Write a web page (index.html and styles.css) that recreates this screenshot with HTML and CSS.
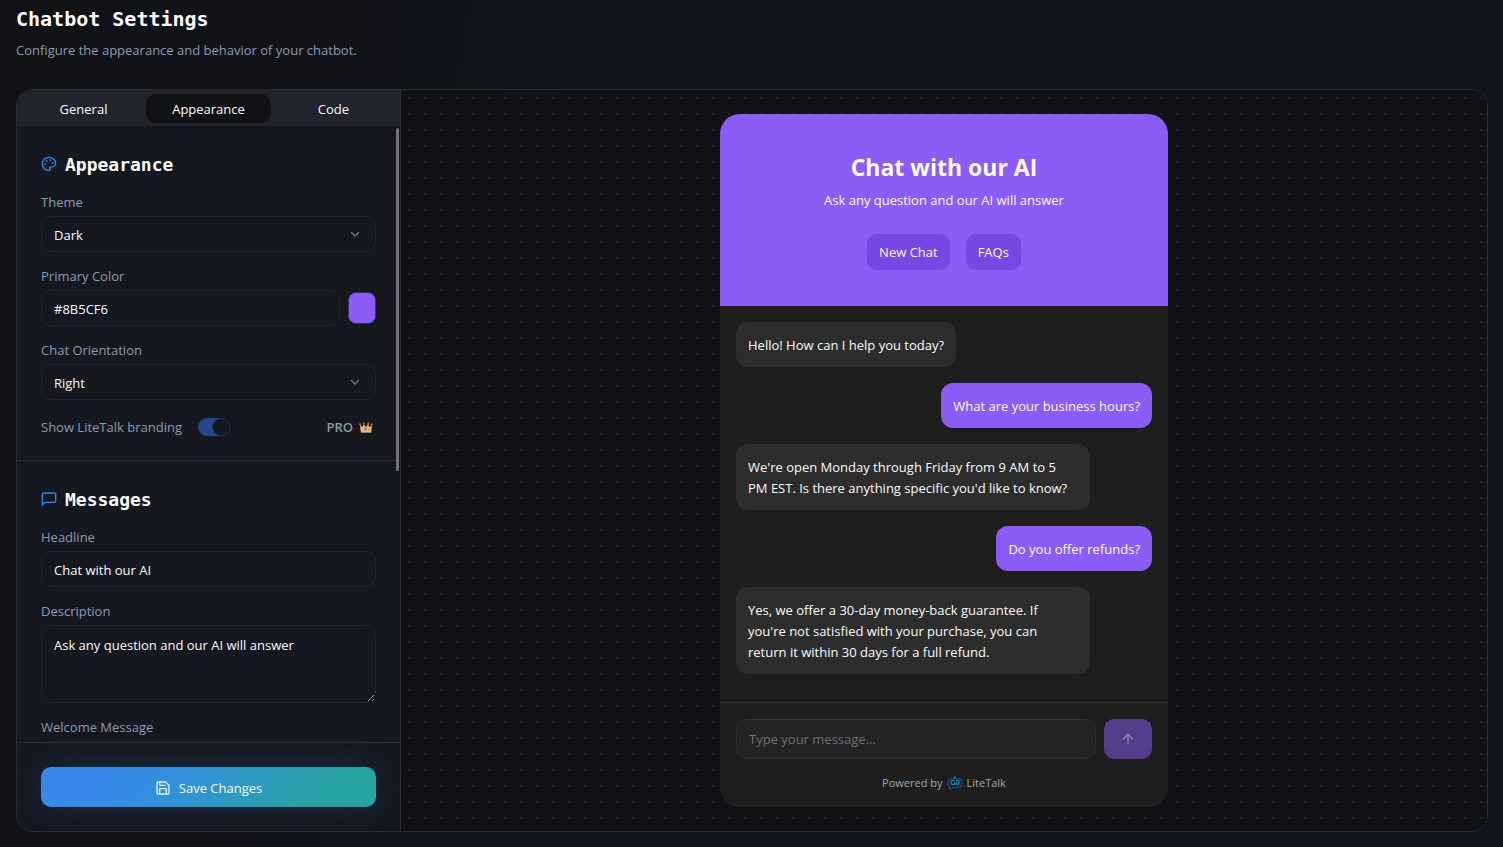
FILE: index.html
```html
<!DOCTYPE html>
<html lang="en">
<head>
<meta charset="utf-8">
<meta name="viewport" content="width=device-width, initial-scale=1">
<title>Chatbot Settings</title>
<link rel="stylesheet" href="styles.css">
</head>
<body>
<div class="page">
  <header class="page-header">
    <h1 class="page-title">Chatbot Settings</h1>
    <p class="page-subtitle">Configure the appearance and behavior of your chatbot.</p>
  </header>
  <main class="panel">
    <form class="settings">
      <div class="tabs" role="tablist">
        <button class="tab" type="button" role="tab" aria-selected="false">General</button>
        <button class="tab tab-active" type="button" role="tab" aria-selected="true">Appearance</button>
        <button class="tab" type="button" role="tab" aria-selected="false">Code</button>
      </div>
      <div class="scroll-wrap">
        <div class="scroll-area">
          <section class="section">
            <h2 class="section-title">
              <svg class="section-icon" viewBox="0 0 24 24" aria-hidden="true"><circle cx="13.5" cy="6.5" r=".5"/><circle cx="17.5" cy="10.5" r=".5"/><circle cx="8.5" cy="7.5" r=".5"/><circle cx="6.5" cy="12.5" r=".5"/><path d="M12 2C6.5 2 2 6.5 2 12s4.500 10 10 10c.926 0 1.648-.746 1.648-1.688 0-.437-.18-.835-.437-1.125-.29-.289-.438-.652-.438-1.125a1.640 1.640 0 0 1 1.668-1.668h1.996c3.051 0 5.555-2.503 5.555-5.554C21.965 6.012 17.461 2 12 2z"/></svg>
              <span class="section-name">Appearance</span>
            </h2>
            <div class="field">
              <label class="label" for="theme">Theme</label>
              <div class="select-wrap">
                <select class="control select" id="theme"><option>Dark</option><option>Light</option></select>
                <svg class="chevron" viewBox="0 0 24 24" aria-hidden="true"><path d="m6 9 6 6 6-6"/></svg>
              </div>
            </div>
            <div class="field">
              <label class="label" for="color">Primary Color</label>
              <div class="color-row">
                <input class="control" id="color" type="text" value="#8B5CF6">
                <button class="swatch" type="button" aria-label="Pick color"></button>
              </div>
            </div>
            <div class="field">
              <label class="label" for="orientation">Chat Orientation</label>
              <div class="select-wrap">
                <select class="control select" id="orientation"><option>Right</option><option>Left</option></select>
                <svg class="chevron" viewBox="0 0 24 24" aria-hidden="true"><path d="m6 9 6 6 6-6"/></svg>
              </div>
            </div>
            <div class="switch-row">
              <label class="label" for="branding">Show LiteTalk branding</label>
              <input class="switch" id="branding" type="checkbox" role="switch" checked>
              <span class="pro">PRO
                <svg class="crown" viewBox="0 0 16 16" aria-hidden="true"><path d="M1 5l3 3 1.500-4L8 8l2.500-4L12 8l3-3-1 9.500H2z" fill="#e2a04a"/><path d="M2 9l4-1 2 1 2-1 4 1-.5 4.500h-11z" fill="#f0be7c"/><circle cx="1.200" cy="4.800" r="1" fill="#b98238"/><circle cx="14.800" cy="4.800" r="1" fill="#b98238"/><circle cx="5.500" cy="3.500" r="1" fill="#b98238"/><circle cx="10.500" cy="3.500" r="1" fill="#b98238"/><circle cx="7.500" cy="10.500" r="1.600" fill="#4a83e0"/><circle cx="11" cy="11" r=".8" fill="#d9563f"/></svg>
              </span>
            </div>
          </section>
          <section class="section">
            <h2 class="section-title">
              <svg class="section-icon" viewBox="0 0 24 24" aria-hidden="true"><path d="M22 15a2 2 0 0 1-2 2H6l-4 4V5a2 2 0 0 1 2-2h16a2 2 0 0 1 2 2z"/></svg>
              <span class="section-name">Messages</span>
            </h2>
            <div class="field">
              <label class="label" for="headline">Headline</label>
              <input class="control" id="headline" type="text" value="Chat with our AI">
            </div>
            <div class="field">
              <label class="label" for="description">Description</label>
              <textarea class="control textarea" id="description">Ask any question and our AI will answer</textarea>
            </div>
            <div class="field">
              <label class="label" for="welcome">Welcome Message</label>
              <input class="control" id="welcome" type="text">
            </div>
          </section>
        </div>
        <div class="scroll-thumb"></div>
      </div>
      <div class="settings-footer">
        <button class="save" type="submit">
          <svg class="save-icon" viewBox="0 0 24 24" aria-hidden="true"><path d="M15.200 3a2 2 0 0 1 1.400.6l3.800 3.800a2 2 0 0 1 .6 1.400V19a2 2 0 0 1-2 2H5a2 2 0 0 1-2-2V5a2 2 0 0 1 2-2z"/><path d="M17 21v-7a1 1 0 0 0-1-1H8a1 1 0 0 0-1 1v7"/><path d="M7 3v4a1 1 0 0 0 1 1h7"/></svg>
          Save Changes
        </button>
      </div>
    </form>
    <section class="preview">
      <div class="chat">
        <header class="chat-header">
          <h2 class="chat-title">Chat with our AI</h2>
          <p class="chat-desc">Ask any question and our AI will answer</p>
          <div class="chat-actions">
            <button class="chat-action" type="button">New Chat</button>
            <button class="chat-action" type="button">FAQs</button>
          </div>
        </header>
        <div class="messages">
          <p class="bubble">Hello! How can I help you today?</p>
          <p class="bubble bubble-user">What are your business hours?</p>
          <p class="bubble">We're open Monday through Friday from 9 AM to 5 PM EST. Is there anything specific you'd like to know?</p>
          <p class="bubble bubble-user">Do you offer refunds?</p>
          <p class="bubble">Yes, we offer a 30-day money-back guarantee. If you're not satisfied with your purchase, you can return it within 30 days for a full refund.</p>
        </div>
        <footer class="chat-footer">
          <form class="composer">
            <input class="composer-input" type="text" placeholder="Type your message..." aria-label="Message">
            <button class="send" type="button" aria-label="Send">
              <svg class="send-icon" viewBox="0 0 24 24" aria-hidden="true"><path d="m5 12 7-7 7 7M12 19V5"/></svg>
            </button>
          </form>
          <p class="powered">Powered by
            <svg class="bot" viewBox="0 0 16 16" aria-hidden="true"><path d="M4 3.500h8a3 3 0 0 1 3 3v3a3 3 0 0 1-3 3H6l-3 2v-2.200a3 3 0 0 1-2-2.800v-3a3 3 0 0 1 3-3z" fill="#16243c" stroke="#2a4a8c"/><path d="M8 3V1M7 5.500H5.500a1.500 1.500 0 0 0-1.500 1.500v1a1.500 1.500 0 0 0 1.500 1.500H7.500V7.500M9 5.500h1.500a1.500 1.500 0 0 1 1.500 1.500v1a1.500 1.500 0 0 1-1.500 1.500H9.500V7.500" fill="none" stroke="#25a0c4"/></svg>
            LiteTalk</p>
        </footer>
      </div>
    </section>
  </main>
</div>
</body>
</html>
```
FILE: styles.css
```css
* { box-sizing: border-box; }

body {
  margin: 0;
  background: linear-gradient(100deg, #111216 0%, #111319 20%, #10151e 50%, #10141c 100%);
  color: #fafafa;
  font-family: "Open Sans", "Noto Sans", sans-serif;
  font-size: 13px;
  font-weight: 500;
  line-height: 20px;
}

h1, h2, p { margin: 0; }
button, input, select, textarea { font: inherit; color: inherit; }
button { border: 0; padding: 0; cursor: pointer; }

.page {
  display: flex;
  flex-direction: column;
  height: 100vh;
  min-height: 600px;
  padding: 3px 15px 15px 16px;
}
.page-header { display: flex; flex-direction: column; gap: 5px; padding-bottom: 29px; }
.page-title { font: bold 20px/32px "DejaVu Sans Mono", monospace; }
.page-subtitle { color: #8b9ab2; }

.panel {
  display: flex;
  flex: 1;
  min-height: 0;
  border: 1px solid #2a2d37;
  border-radius: 16px;
  overflow: hidden;
}

.settings {
  display: flex;
  flex-direction: column;
  flex: none;
  width: 384px;
  background: #15181f;
  border-right: 1px solid #2a2d37;
}
.tabs {
  display: grid;
  grid-template-columns: repeat(3, 1fr);
  height: 36px;
  padding: 4px 4px 3px;
  background: #21242d;
}
.tab { background: transparent; border-radius: 10px; }
.tab-active { background: #111216; }

.scroll-wrap { position: relative; flex: 1; min-height: 0; }
.scroll-area { height: 100%; overflow-y: auto; scrollbar-width: none; }
.scroll-thumb {
  position: absolute;
  top: 2px;
  right: 1px;
  width: 3px;
  height: 343px;
  border-radius: 2px;
  background: #707277;
}

.section {
  display: flex;
  flex-direction: column;
  gap: 14px;
  padding: 24px;
  border-bottom: 1px solid #2a2d37;
}
.section-title {
  display: flex;
  align-items: center;
  gap: 8px;
  height: 28px;
  font: bold 18px/28px "DejaVu Sans Mono", monospace;
}
.section-name { padding-top: 2px; }
.section-icon {
  width: 16px;
  height: 16px;
  fill: none;
  stroke: #3585e8;
  stroke-width: 2;
  stroke-linecap: round;
  stroke-linejoin: round;
}
.field { display: flex; flex-direction: column; gap: 4px; }
.label { color: #8b9ab2; }
.control {
  display: block;
  width: 100%;
  height: 36px;
  padding: 1px 12px 0;
  border: 1px solid #21242d;
  border-radius: 10px;
  background: transparent;
  outline: none;
}
.select { appearance: none; }
.select-wrap { position: relative; }
.chevron {
  position: absolute;
  top: 10px;
  right: 13px;
  width: 16px;
  height: 16px;
  fill: none;
  stroke: #6d7077;
  stroke-width: 2;
  pointer-events: none;
}
.textarea { height: 78px; padding: 9px 12px; resize: vertical; }
.color-row { display: flex; align-items: center; gap: 8px; }
.swatch {
  flex: none;
  width: 28px;
  height: 32px;
  border: 1px solid #3b3560;
  border-radius: 8px;
  background: #8b5cf6;
}
.switch-row { display: flex; align-items: center; height: 22px; padding-top: 3px; }
.switch {
  appearance: none;
  width: 32px;
  height: 18px;
  margin: 0 0 0 16px;
  border-radius: 9px;
  background: radial-gradient(circle at 23px 9px, #15181f 8px, #274690 9px);
}
.pro {
  display: flex;
  align-items: center;
  gap: 6px;
  margin-left: auto;
  padding-right: 3px;
  color: #8e98a5;
  font-weight: 600;
}
.crown { width: 14px; height: 14px; }

.settings-footer {
  position: relative;
  padding: 24px;
  border-top: 1px solid #2a2d37;
}
.save {
  display: flex;
  align-items: center;
  justify-content: center;
  gap: 8px;
  width: 100%;
  height: 40px;
  padding-top: 1px;
  border-radius: 10px;
  background: linear-gradient(135deg, #3888ec 20%, #3194d4 45%, #28a3a4 80%);
  box-shadow: 0 0 32px rgba(56, 132, 240, 0.2);
}
.save-icon {
  width: 16px;
  height: 16px;
  fill: none;
  stroke: #e4f4fb;
  stroke-width: 2;
  stroke-linecap: round;
  stroke-linejoin: round;
}

.preview {
  display: flex;
  justify-content: center;
  flex: 1;
  min-width: 0;
  padding: 24px;
  background: radial-gradient(circle, #24262e 1px, transparent 1px) 0 0 / 16px 16px #111216;
}
.chat {
  display: flex;
  flex-direction: column;
  width: 100%;
  max-width: 448px;
  border-radius: 20px;
  background: #1e1e1e;
  overflow: hidden;
}
.chat-header {
  display: flex;
  flex-direction: column;
  align-items: center;
  padding: 36px 16px;
  background: #8b5cf6;
}
.chat-title { font-size: 23px; font-weight: 700; line-height: 34px; }
.chat-desc { margin-top: 6px; }
.chat-actions { display: flex; gap: 16px; margin-top: 24px; }
.chat-action {
  height: 36px;
  padding: 0 12px;
  border-radius: 10px;
  background: #7748e3;
}
.messages {
  display: flex;
  flex: 1;
  flex-direction: column;
  align-items: flex-start;
  gap: 16px;
  min-height: 0;
  padding: 16px;
  overflow: hidden;
}
.bubble {
  max-width: 85%;
  padding: 13px 12px 11px;
  border-radius: 12px;
  background: #2d2d2d;
  line-height: 21px;
}
.bubble-user { align-self: flex-end; background: #8b5cf6; }
.chat-footer {
  display: flex;
  flex-direction: column;
  gap: 16px;
  padding: 16px;
  border-top: 1px solid #2d2e3b;
}
.composer { display: flex; gap: 8px; }
.composer-input {
  flex: 1;
  min-width: 0;
  height: 40px;
  padding: 0 12px;
  border: 1px solid #2e2f34;
  border-radius: 10px;
  background: #232323;
  outline: none;
}
.composer-input::placeholder { color: #6d6f77; opacity: 1; }
.send {
  display: grid;
  place-items: center;
  width: 48px;
  height: 40px;
  border-radius: 10px;
  background: #553c8c;
}
.send-icon {
  width: 16px;
  height: 16px;
  fill: none;
  stroke: #8d8a94;
  stroke-width: 2;
  stroke-linecap: round;
  stroke-linejoin: round;
}
.powered {
  display: flex;
  align-items: center;
  justify-content: center;
  gap: 4px;
  color: #a1a5ae;
  font-size: 11px;
  line-height: 16px;
}
.bot { width: 16px; height: 16px; }
```
